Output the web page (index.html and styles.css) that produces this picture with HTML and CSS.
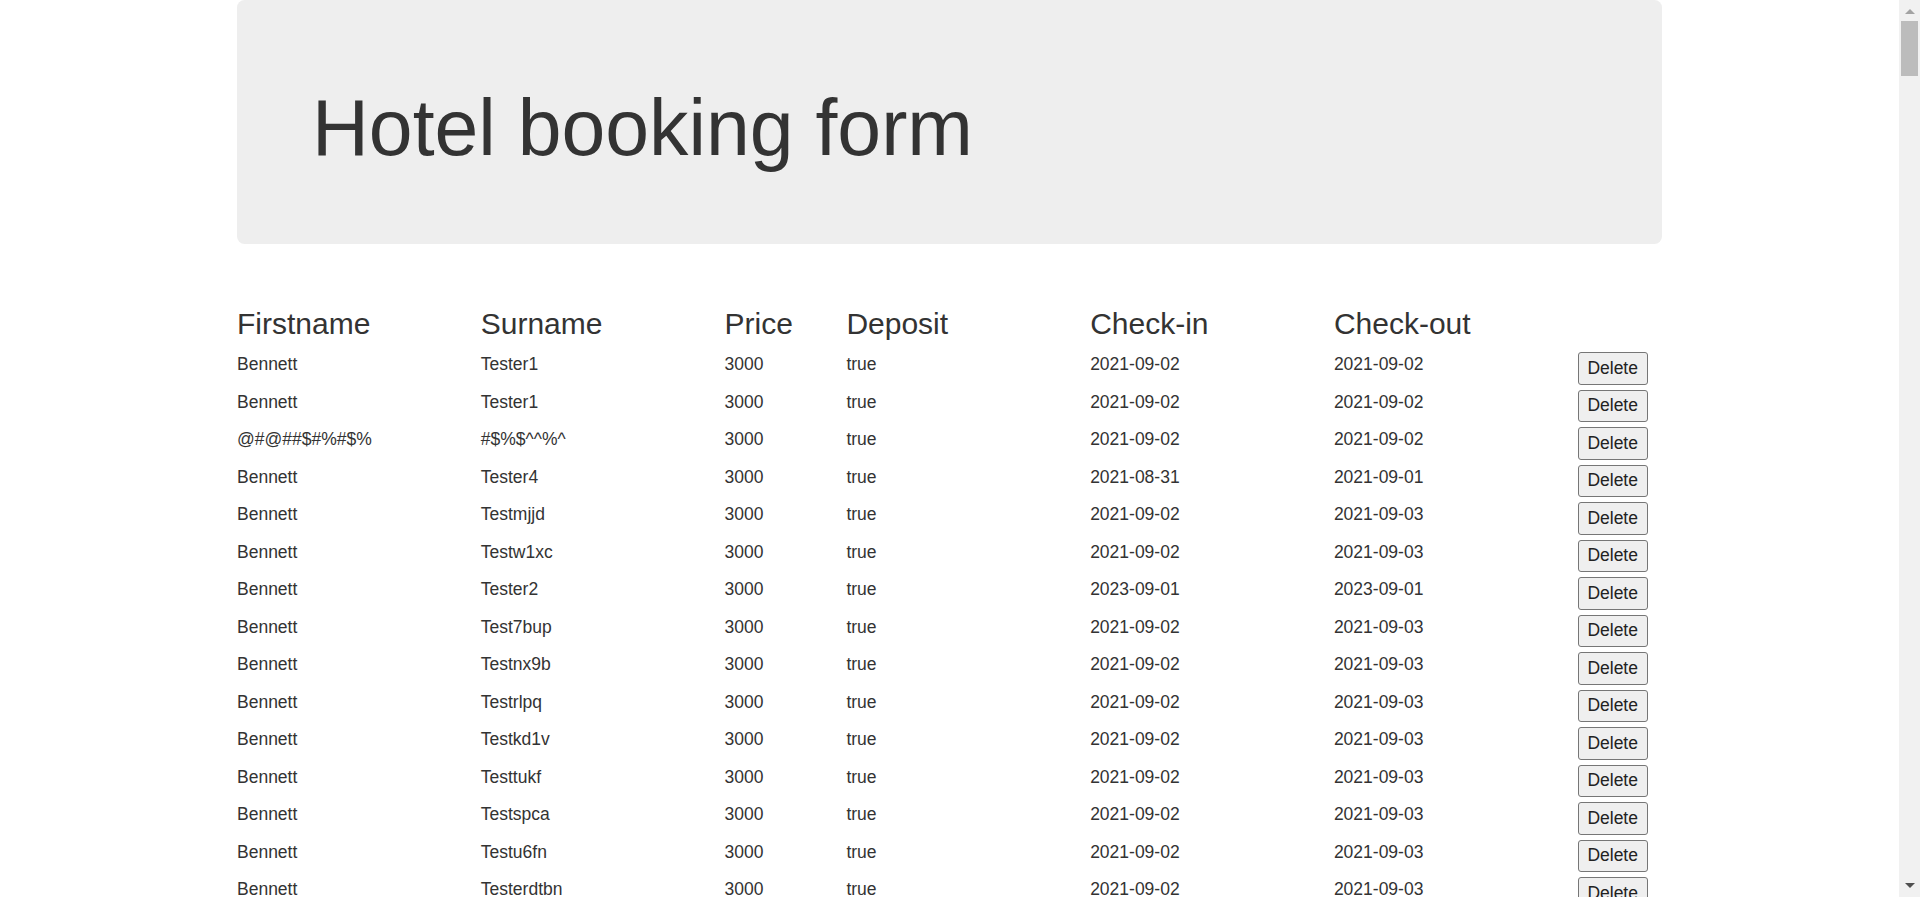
FILE: index.html
```html
<!DOCTYPE html>
<html lang="en">
<head>
<meta charset="utf-8">
<title>Hotel booking form</title>
<link rel="stylesheet" href="styles.css">
</head>
<body>
<div class="container">
  <div class="jumbotron">
    <h1>Hotel booking form</h1>
  </div>
  <div id="bookings">
    <div class="row">
      <div class="col-2"><h3>Firstname</h3></div>
      <div class="col-2"><h3>Surname</h3></div>
      <div class="col-1"><h3>Price</h3></div>
      <div class="col-2"><h3>Deposit</h3></div>
      <div class="col-2"><h3>Check-in</h3></div>
      <div class="col-2"><h3>Check-out</h3></div>
      <div class="col-1"></div>
    </div>
    <div class="row"><div class="col-2"><p>Bennett</p></div><div class="col-2"><p>Tester1</p></div><div class="col-1"><p>3000</p></div><div class="col-2"><p>true</p></div><div class="col-2"><p>2021-09-02</p></div><div class="col-2"><p>2021-09-02</p></div><div class="col-1"><button class="btn-delete" type="button">Delete</button></div></div>
    <div class="row"><div class="col-2"><p>Bennett</p></div><div class="col-2"><p>Tester1</p></div><div class="col-1"><p>3000</p></div><div class="col-2"><p>true</p></div><div class="col-2"><p>2021-09-02</p></div><div class="col-2"><p>2021-09-02</p></div><div class="col-1"><button class="btn-delete" type="button">Delete</button></div></div>
    <div class="row"><div class="col-2"><p>@#@##$#%#$%</p></div><div class="col-2"><p>#$%$^^%^</p></div><div class="col-1"><p>3000</p></div><div class="col-2"><p>true</p></div><div class="col-2"><p>2021-09-02</p></div><div class="col-2"><p>2021-09-02</p></div><div class="col-1"><button class="btn-delete" type="button">Delete</button></div></div>
    <div class="row"><div class="col-2"><p>Bennett</p></div><div class="col-2"><p>Tester4</p></div><div class="col-1"><p>3000</p></div><div class="col-2"><p>true</p></div><div class="col-2"><p>2021-08-31</p></div><div class="col-2"><p>2021-09-01</p></div><div class="col-1"><button class="btn-delete" type="button">Delete</button></div></div>
    <div class="row"><div class="col-2"><p>Bennett</p></div><div class="col-2"><p>Testmjjd</p></div><div class="col-1"><p>3000</p></div><div class="col-2"><p>true</p></div><div class="col-2"><p>2021-09-02</p></div><div class="col-2"><p>2021-09-03</p></div><div class="col-1"><button class="btn-delete" type="button">Delete</button></div></div>
    <div class="row"><div class="col-2"><p>Bennett</p></div><div class="col-2"><p>Testw1xc</p></div><div class="col-1"><p>3000</p></div><div class="col-2"><p>true</p></div><div class="col-2"><p>2021-09-02</p></div><div class="col-2"><p>2021-09-03</p></div><div class="col-1"><button class="btn-delete" type="button">Delete</button></div></div>
    <div class="row"><div class="col-2"><p>Bennett</p></div><div class="col-2"><p>Tester2</p></div><div class="col-1"><p>3000</p></div><div class="col-2"><p>true</p></div><div class="col-2"><p>2023-09-01</p></div><div class="col-2"><p>2023-09-01</p></div><div class="col-1"><button class="btn-delete" type="button">Delete</button></div></div>
    <div class="row"><div class="col-2"><p>Bennett</p></div><div class="col-2"><p>Test7bup</p></div><div class="col-1"><p>3000</p></div><div class="col-2"><p>true</p></div><div class="col-2"><p>2021-09-02</p></div><div class="col-2"><p>2021-09-03</p></div><div class="col-1"><button class="btn-delete" type="button">Delete</button></div></div>
    <div class="row"><div class="col-2"><p>Bennett</p></div><div class="col-2"><p>Testnx9b</p></div><div class="col-1"><p>3000</p></div><div class="col-2"><p>true</p></div><div class="col-2"><p>2021-09-02</p></div><div class="col-2"><p>2021-09-03</p></div><div class="col-1"><button class="btn-delete" type="button">Delete</button></div></div>
    <div class="row"><div class="col-2"><p>Bennett</p></div><div class="col-2"><p>Testrlpq</p></div><div class="col-1"><p>3000</p></div><div class="col-2"><p>true</p></div><div class="col-2"><p>2021-09-02</p></div><div class="col-2"><p>2021-09-03</p></div><div class="col-1"><button class="btn-delete" type="button">Delete</button></div></div>
    <div class="row"><div class="col-2"><p>Bennett</p></div><div class="col-2"><p>Testkd1v</p></div><div class="col-1"><p>3000</p></div><div class="col-2"><p>true</p></div><div class="col-2"><p>2021-09-02</p></div><div class="col-2"><p>2021-09-03</p></div><div class="col-1"><button class="btn-delete" type="button">Delete</button></div></div>
    <div class="row"><div class="col-2"><p>Bennett</p></div><div class="col-2"><p>Testtukf</p></div><div class="col-1"><p>3000</p></div><div class="col-2"><p>true</p></div><div class="col-2"><p>2021-09-02</p></div><div class="col-2"><p>2021-09-03</p></div><div class="col-1"><button class="btn-delete" type="button">Delete</button></div></div>
    <div class="row"><div class="col-2"><p>Bennett</p></div><div class="col-2"><p>Testspca</p></div><div class="col-1"><p>3000</p></div><div class="col-2"><p>true</p></div><div class="col-2"><p>2021-09-02</p></div><div class="col-2"><p>2021-09-03</p></div><div class="col-1"><button class="btn-delete" type="button">Delete</button></div></div>
    <div class="row"><div class="col-2"><p>Bennett</p></div><div class="col-2"><p>Testu6fn</p></div><div class="col-1"><p>3000</p></div><div class="col-2"><p>true</p></div><div class="col-2"><p>2021-09-02</p></div><div class="col-2"><p>2021-09-03</p></div><div class="col-1"><button class="btn-delete" type="button">Delete</button></div></div>
    <div class="row"><div class="col-2"><p>Bennett</p></div><div class="col-2"><p>Testerdtbn</p></div><div class="col-1"><p>3000</p></div><div class="col-2"><p>true</p></div><div class="col-2"><p>2021-09-02</p></div><div class="col-2"><p>2021-09-03</p></div><div class="col-1"><button class="btn-delete" type="button">Delete</button></div></div>
  </div>
</div>
<div class="scrollbar" aria-hidden="true">
  <div class="scroll-arrow scroll-arrow-up"></div>
  <div class="scroll-track"><div class="scroll-thumb"></div></div>
  <div class="scroll-arrow scroll-arrow-down"></div>
</div>
</body>
</html>
```

FILE: styles.css
```css
html {
  background: #fff;
  scrollbar-width: none;
}

body {
  margin: 0;
  padding-right: 21px;
  font-family: "Liberation Sans", Arial, Helvetica, sans-serif;
  font-size: 17.5px;
  line-height: 25px;
  color: #333;
  background: #fff;
}

.container {
  width: 1462.5px;
  box-sizing: border-box;
  padding: 0 18.75px;
  margin: 0 auto;
}

.jumbotron {
  background: #eee;
  border-radius: 7.5px;
  padding: 60px 75px;
  margin-bottom: 37.5px;
}

.jumbotron h1 {
  margin: 25px 0 12.5px;
  font-size: 78.75px;
  line-height: 1.1;
  font-weight: 500;
  color: inherit;
}

.row {
  display: flex;
  margin: 0 -18.75px;
}

.col-1,
.col-2 {
  box-sizing: border-box;
  padding: 0 18.75px;
  min-height: 1px;
  flex: none;
}

.col-1 {
  width: 121.875px;
}

.col-2 {
  width: 243.75px;
}

.row h3 {
  margin: 25px 0 12.5px;
  font-size: 30px;
  line-height: 1.1;
  font-weight: 500;
  white-space: nowrap;
}

.row p {
  margin: 0 0 12.5px;
  white-space: nowrap;
}

.btn-delete {
  font-family: "Liberation Sans", Arial, Helvetica, sans-serif;
  font-size: 17.5px;
  line-height: 25px;
  color: #222;
  background: #efefef;
  border: 1px solid #767676;
  border-radius: 3px;
  padding: 2.75px 8.75px;
  margin: 0;
  cursor: pointer;
}

/* browser scrollbar, as seen in the screenshot */
.scrollbar {
  position: fixed;
  top: 0;
  right: 0;
  width: 21px;
  height: 100vh;
  background: #f1f1f1;
  display: flex;
  flex-direction: column;
}

.scroll-arrow {
  height: 21px;
  flex: none;
  display: flex;
  align-items: center;
  justify-content: center;
}

.scroll-arrow::before {
  content: "";
  width: 0;
  height: 0;
  border-left: 5px solid transparent;
  border-right: 5px solid transparent;
}

.scroll-arrow-up::before {
  border-bottom: 5px solid #a3a3a3;
  margin-top: 2px;
}

.scroll-arrow-down::before {
  border-top: 5px solid #505050;
  margin-bottom: 2px;
}

.scroll-track {
  flex: 1;
  padding: 0 2px;
}

.scroll-thumb {
  height: 55px;
  background: #bcbcbc;
}
```
